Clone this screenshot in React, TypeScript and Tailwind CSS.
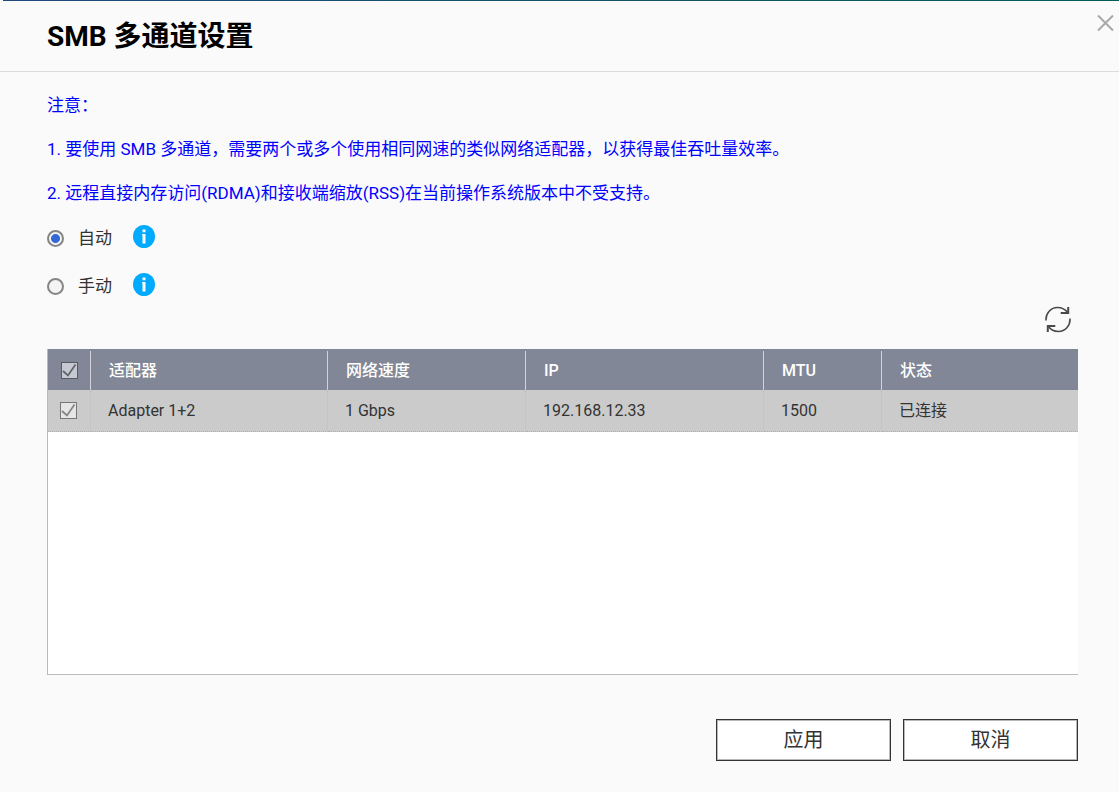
import React, { useState } from 'react'

type Adapter = {
  id: string
  name: string
  speed: string
  ip: string
  mtu: number
  status: string
}

type Mode = 'auto' | 'manual'

const adapters: Adapter[] = [
  { id: 'bond0', name: 'Adapter 1+2', speed: '1 Gbps', ip: '192.168.12.33', mtu: 1500, status: '已连接' },
]

const columns = ['适配器', '网络速度', 'IP', 'MTU', '状态']

const InfoIcon: React.FC = () => (
  <svg width="22" height="23" viewBox="0 0 22 23" aria-hidden="true">
    <ellipse cx="11" cy="11.5" rx="11" ry="11.5" fill="#00aaff" />
    <path d="M9.500 4.500h3v2.800h-3z M9 9h3.500v9.500h-3v-8.300H9z" fill="#fff" />
  </svg>
)

const CheckBox: React.FC<{ label: string; header?: boolean }> = ({ label, header }) => (
  <span className="relative block w-[17px] h-[17px]">
    <input
      type="checkbox"
      aria-label={label}
      defaultChecked
      disabled
      className={`peer block appearance-none w-[17px] h-[17px] border ${header ? 'bg-[#c6c9d1] border-[#55585e]' : 'bg-[#e6e6e6] border-[#777777]'}`}
    />
    <svg
      viewBox="0 0 17 17"
      aria-hidden="true"
      className={`pointer-events-none absolute inset-0 hidden peer-checked:block ${header ? 'text-[#62656b]' : 'text-[#858585]'}`}
    >
      <path d="M2 9l5 4.500L14.500 2.500" fill="none" stroke="currentColor" strokeWidth="1.8" />
    </svg>
  </span>
)

type ModeOptionProps = {
  value: Mode
  label: string
  mode: Mode
  onChange: (mode: Mode) => void
}

const ModeOption: React.FC<ModeOptionProps> = ({ value, label, mode, onChange }) => (
  <div className="flex items-center h-12 pb-0.5">
    <label className="flex items-center w-[86px] text-[17px] leading-6 text-[#333333]">
      <input
        type="radio"
        name="mode"
        value={value}
        checked={mode === value}
        onChange={() => onChange(value)}
        className="appearance-none shrink-0 w-[17px] h-[17px] mr-[14px] mt-px rounded-full border-2 border-[#858585] bg-[#f4f4f4] checked:bg-[radial-gradient(circle,#3369d6_4px,#f4f4f4_5px)]"
      />
      {label}
    </label>
    <button type="button" aria-label={`${label}说明`} className="mb-[3px]">
      <InfoIcon />
    </button>
  </div>
)

const App: React.FC = () => {
  const [mode, setMode] = useState<Mode>('auto')

  return (
    <div className="min-h-screen flex flex-col bg-[#fafafa] text-[#333333] font-[Roboto,'Noto_Sans_CJK_SC',sans-serif]">
      <div className="h-px ml-[3px] bg-linear-to-r from-[#1f497c] to-[#005c58]" />
      <header className="flex items-start justify-between h-[71px] border-b border-[#dcdcdc] pl-[47px] pr-[5px]">
        <h1 className="pt-4 text-[28px] leading-10 font-bold text-black">SMB 多通道设置</h1>
        <button type="button" aria-label="关闭" className="mt-[13px]">
          <svg width="17" height="18" viewBox="0 0 17 18" fill="none" stroke="#a8a8a8" strokeWidth="2" aria-hidden="true">
            <path d="M1 1.5l15 15M16 1.5l-15 15" />
          </svg>
        </button>
      </header>

      <main className="flex-1 flex flex-col pl-[47px] pr-[41px] pt-[11px] pb-[31px]">
        <div className="text-[17px] leading-[44px] text-[#0000ff]">
          <p>注意：</p>
          <p>1. 要使用 SMB 多通道，需要两个或多个使用相同网速的类似网络适配器，以获得最佳吞吐量效率。</p>
          <p>2. 远程直接内存访问(RDMA)和接收端缩放(RSS)在当前操作系统版本中不受支持。</p>
        </div>

        <ModeOption value="auto" label="自动" mode={mode} onChange={setMode} />
        <ModeOption value="manual" label="手动" mode={mode} onChange={setMode} />

        <div className="flex justify-end h-[38px] pr-[7px]">
          <button type="button" aria-label="刷新" className="self-start -mt-[5px]">
            <svg width="26" height="27" viewBox="0 0 26 27" fill="none" stroke="#4a4a4a" strokeWidth="1.6" aria-hidden="true">
              <path d="M1 14.500C0.500 7 6 1.500 12.500 1.500c4.200 0 8 2 10.300 5.200" />
              <path d="M23.200 1v6h-7.500" strokeWidth="2" />
              <path d="M25 12.500C25.500 20 20 25.500 13.500 25.500c-4.200 0-8-2-10.300-5.200" />
              <path d="M2.800 26V20h7.500" strokeWidth="2" />
            </svg>
          </button>
        </div>

        <div className="flex-1 bg-white border-l border-b border-[#bbbbbb]">
          <table className="w-full table-fixed border-separate border-spacing-0 text-base leading-6 text-left">
            <colgroup>
              <col className="w-[43px]" />
              <col className="w-[237px]" />
              <col className="w-[198px]" />
              <col className="w-[238px]" />
              <col className="w-[118px]" />
              <col />
            </colgroup>
            <thead className="bg-[#818796] text-white">
              <tr>
                <th className="p-0 pt-0.5">
                  <div className="flex items-center h-[39px] pl-[13px] border-r border-[#d0d3da]">
                    <CheckBox label="全选" header />
                  </div>
                </th>
                {columns.map((column) => (
                  <th key={column} className="group p-0 pt-0.5 font-medium">
                    <div className="flex items-center h-[39px] pl-[18px] border-r border-[#d0d3da] group-last:border-r-0">{column}</div>
                  </th>
                ))}
              </tr>
            </thead>
            <tbody className="bg-[#cbcbcb]">
              {adapters.map((adapter) => (
                <tr key={adapter.id} className="h-[42px] *:border-b *:border-dotted *:border-b-[#b0b0b0]">
                  <td className="p-0 pl-3 border-r border-r-[#bdbdbd]">
                    <CheckBox label={adapter.name} />
                  </td>
                  <td className="p-0 pl-[17px] border-r border-r-[#bdbdbd]">{adapter.name}</td>
                  <td className="p-0 pl-[17px] border-r border-r-[#bdbdbd]">{adapter.speed}</td>
                  <td className="p-0 pl-[17px] border-r border-r-[#bdbdbd]">{adapter.ip}</td>
                  <td className="p-0 pl-[17px] border-r border-r-[#bdbdbd]">{adapter.mtu}</td>
                  <td className="p-0 pl-[17px]">{adapter.status}</td>
                </tr>
              ))}
            </tbody>
          </table>
        </div>

        <div className="flex justify-end gap-3 mt-11">
          <button type="button" className="w-[175px] h-[42px] bg-white border border-[#333333] inset-shadow-[0_0_0_1px_#b8b8b8] text-xl">应用</button>
          <button type="button" className="w-[175px] h-[42px] bg-white border border-[#333333] inset-shadow-[0_0_0_1px_#b8b8b8] text-xl">取消</button>
        </div>
      </main>
    </div>
  )
}

export default App
